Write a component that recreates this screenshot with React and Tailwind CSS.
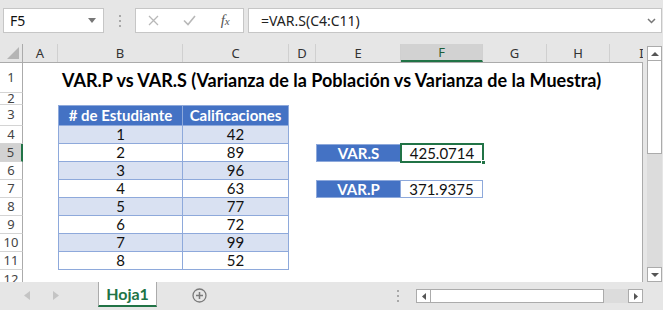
import React from "react";

const ui = { fontFamily: '"Noto Sans", "Liberation Sans", sans-serif' };
const cell = { fontFamily: 'Lato, "Liberation Sans", sans-serif' };

const data = [
  [1, 42],
  [2, 89],
  [3, 96],
  [4, 63],
  [5, 77],
  [6, 72],
  [7, 99],
  [8, 52],
];

const Dots = () => (
  <div className="flex flex-col gap-[3px]">
    <span className="w-[2px] h-[2px] bg-[#a8a8a8]" />
    <span className="w-[2px] h-[2px] bg-[#a8a8a8]" />
    <span className="w-[2px] h-[2px] bg-[#a8a8a8]" />
  </div>
);

const RowHead = ({ n, sel }) => (
  <div
    className={`w-[23px] shrink-0 flex items-center justify-center text-[13px] text-[#444] border-b border-[#d4d4d4] ${
      sel ? "bg-[#d2d2d2] border-r-2 border-r-[#217346]" : "border-r border-r-[#ababab]"
    }`}
    style={ui}
  >
    {n}
  </div>
);

const ColHead = ({ w, label, sel }) => (
  <div
    className={`${w} shrink-0 flex items-center justify-center text-[13px] leading-none border-r border-[#d0d0d0] ${
      sel ? "bg-[#d2d2d2] border-b-2 border-b-[#217346] text-[#1d5e3a]" : "text-[#333]"
    }`}
    style={ui}
  >
    {label}
  </div>
);

export default function App() {
  return (
    <div className="w-[663px] h-[310px] bg-[#e6e6e6] flex flex-col overflow-hidden text-[#111]">
      {/* formula bar */}
      <div className="h-[44px] shrink-0 flex items-start pt-[8px]">
        <div className="ml-[3px] w-[101px] h-[25px] bg-white border border-[#c6c6c6] flex items-center justify-between pl-[6px] pr-[7px]">
          <span className="text-[14px]" style={ui}>F5</span>
          <svg width="8" height="5" viewBox="0 0 8 5"><path d="M0 0h8L4 5z" fill="#777" /></svg>
        </div>
        <div className="w-[31px] flex justify-center pt-[7px]">
          <Dots />
        </div>
        <div className="w-[109px] h-[25px] bg-white border border-[#c6c6c6] flex items-center">
          <span className="w-[36px] flex justify-center">
            <svg width="11" height="11" viewBox="0 0 11 11"><path d="M1 1l9 9M10 1l-9 9" stroke="#b8b8b8" strokeWidth="1.3" /></svg>
          </span>
          <span className="w-[36px] flex justify-center">
            <svg width="13" height="11" viewBox="0 0 13 11"><path d="M1 5.5l4 4L12 1" stroke="#b8b8b8" strokeWidth="1.6" fill="none" /></svg>
          </span>
          <span className="w-[36px] flex justify-center items-baseline italic text-[#555]" style={{ fontFamily: '"Liberation Serif", serif' }}>
            <span className="text-[15px]">f</span>
            <span className="text-[11px]">x</span>
          </span>
        </div>
        <div className="ml-[4px] w-[414px] h-[25px] bg-white border border-[#c6c6c6] flex items-center justify-between pl-[12px] pr-[5px]">
          <span className="text-[14px] text-[#222]" style={ui}>=VAR.S(C4:C11)</span>
          <svg width="9" height="6" viewBox="0 0 9 6"><path d="M1 1l3.5 3.5L8 1" stroke="#777" strokeWidth="1.5" fill="none" /></svg>
        </div>
      </div>

      {/* sheet + vertical scrollbar */}
      <div className="h-[238px] shrink-0 flex">
        <div className="w-[643px] shrink-0 flex flex-col overflow-hidden">
          {/* column headers */}
          <div className="h-[19px] shrink-0 flex border-b border-[#ababab]">
            <div className="w-[23px] shrink-0 flex items-end justify-end pr-[3px] pb-[3px] border-r border-[#ababab]">
              <svg width="12" height="12" viewBox="0 0 12 12"><path d="M12 0v12H0z" fill="#b5b5b5" /></svg>
            </div>
            <ColHead w="w-[35px]" label="A" />
            <ColHead w="w-[125px]" label="B" />
            <ColHead w="w-[106px]" label="C" />
            <ColHead w="w-[27px]" label="D" />
            <ColHead w="w-[85px]" label="E" />
            <ColHead w="w-[82px]" label="F" sel />
            <ColHead w="w-[64px]" label="G" />
            <ColHead w="w-[63px]" label="H" />
            <ColHead w="w-[64px]" label="I" />
          </div>

          {/* rows */}
          <div className="flex-1 flex flex-col bg-white border-r border-b border-[#ababab]" style={cell}>
            <div className="h-[30px] shrink-0 flex">
              <RowHead n={1} />
              <div className="w-[35px] shrink-0" />
              <div className="flex-1 flex items-end pl-[4px] pb-[4px]">
                <span className="whitespace-nowrap text-[18px] font-bold leading-none text-black">
                  VAR.P vs VAR.S (Varianza de la Población vs Varianza de la Muestra)
                </span>
              </div>
            </div>
            <div className="h-[12px] shrink-0 flex overflow-hidden">
              <RowHead n={2} />
            </div>
            <div className="h-[21px] shrink-0 flex">
              <RowHead n={3} />
              <div className="w-[35px] shrink-0" />
              <div className="w-[125px] shrink-0 bg-[#4472c4] border border-[#8ea9db] flex items-center justify-center text-white font-bold text-[15px]">
                # de Estudiante
              </div>
              <div className="w-[106px] shrink-0 bg-[#4472c4] border-y border-r border-[#8ea9db] flex items-center justify-center text-white font-bold text-[15px]">
                Calificaciones
              </div>
            </div>
            {data.map(([n, v], i) => {
              const r = i + 4;
              const band = i % 2 === 0 ? "bg-[#d9e1f2]" : "bg-white";
              return (
                <div key={r} className="h-[18px] shrink-0 flex">
                  <RowHead n={r} sel={r === 5} />
                  <div className="w-[35px] shrink-0" />
                  <div className={`w-[125px] shrink-0 ${band} border-x border-b border-[#8ea9db] flex items-center justify-center text-[15px]`}>
                    {n}
                  </div>
                  <div className={`w-[106px] shrink-0 ${band} border-r border-b border-[#8ea9db] flex items-center justify-center text-[15px]`}>
                    {v}
                  </div>
                  <div className="w-[27px] shrink-0" />
                  {r === 5 && (
                    <>
                      <div className="w-[85px] shrink-0 bg-[#4472c4] border border-[#8ea9db] flex items-center justify-center text-white font-bold text-[15px]">
                        VAR.S
                      </div>
                      <div className="w-[82px] shrink-0 relative flex items-center justify-center text-[15px]">
                        425.0714
                        <div className="absolute -top-[1px] -left-[1px] -right-[1px] -bottom-[1px] border-2 border-[#217346]" />
                        <div className="absolute -right-[3px] -bottom-[3px] w-[5px] h-[5px] bg-[#217346] border border-white" />
                      </div>
                    </>
                  )}
                  {r === 7 && (
                    <>
                      <div className="w-[85px] shrink-0 bg-[#4472c4] border border-[#8ea9db] flex items-center justify-center text-white font-bold text-[15px]">
                        VAR.P
                      </div>
                      <div className="w-[82px] shrink-0 border-y border-r border-[#8ea9db] flex items-center justify-center text-[15px]">
                        371.9375
                      </div>
                    </>
                  )}
                </div>
              );
            })}
            <div className="flex-1 flex overflow-hidden">
              <RowHead n={12} />
            </div>
          </div>
        </div>

        {/* vertical scrollbar */}
        <div className="w-[20px] shrink-0 flex flex-col pl-[4px] pr-[1px] pt-[2px]">
          <div className="h-[15px] shrink-0 bg-white border border-[#ababab] flex items-center justify-center">
            <svg width="8" height="4" viewBox="0 0 8 4"><path d="M0 4h8L4 0z" fill="#555" /></svg>
          </div>
          <div className="h-[93px] shrink-0 bg-white border-x border-b border-[#ababab]" />
          <div className="flex-1 bg-[#dcdcdc]" />
          <div className="h-[15px] shrink-0 bg-white border border-[#ababab] flex items-center justify-center">
            <svg width="8" height="4" viewBox="0 0 8 4"><path d="M0 0h8L4 4z" fill="#555" /></svg>
          </div>
        </div>
      </div>

      {/* sheet tabs */}
      <div className="h-[28px] shrink-0 flex items-start">
        <div className="w-[98px] shrink-0 h-[28px] flex items-center pb-[1px]">
          <svg className="ml-[24px]" width="6" height="9" viewBox="0 0 6 9"><path d="M6 0v9L0 4.5z" fill="#c4c4c4" /></svg>
          <svg className="ml-[23px]" width="6" height="9" viewBox="0 0 6 9"><path d="M0 0v9l6-4.5z" fill="#c4c4c4" /></svg>
        </div>
        <div className="w-[59px] shrink-0 h-[25px] bg-white border-x border-[#ababab] border-b-2 border-b-[#217346] flex items-center justify-center text-[16px] font-bold text-[#217346]" style={cell}>
          Hoja1
        </div>
        <div className="w-[84px] shrink-0 h-[28px] flex items-center justify-center pb-[1px]">
          <svg width="15" height="15" viewBox="0 0 15 15">
            <circle cx="7.5" cy="7.5" r="6.5" stroke="#7a7a7a" strokeWidth="1.3" fill="none" />
            <path d="M7.5 4v7M4 7.5h7" stroke="#7a7a7a" strokeWidth="1.5" />
          </svg>
        </div>
        <div className="flex-1 h-[28px] flex items-center justify-end pr-[17px]">
          <Dots />
        </div>
        <div className="w-[227px] shrink-0 h-[14px] mt-[7px] flex">
          <div className="w-[15px] h-[14px] bg-white border border-[#ababab] flex items-center justify-center">
            <svg width="4" height="7" viewBox="0 0 4 7"><path d="M4 0v7L0 3.5z" fill="#555" /></svg>
          </div>
          <div className="w-[173px] h-[14px] bg-white border-y border-r border-[#ababab]" />
          <div className="flex-1 bg-[#dcdcdc]" />
          <div className="w-[15px] h-[14px] bg-white border border-[#ababab] flex items-center justify-center">
            <svg width="4" height="7" viewBox="0 0 4 7"><path d="M0 0v7l4-3.5z" fill="#555" /></svg>
          </div>
        </div>
        <div className="w-[20px] shrink-0" />
      </div>
    </div>
  );
}
